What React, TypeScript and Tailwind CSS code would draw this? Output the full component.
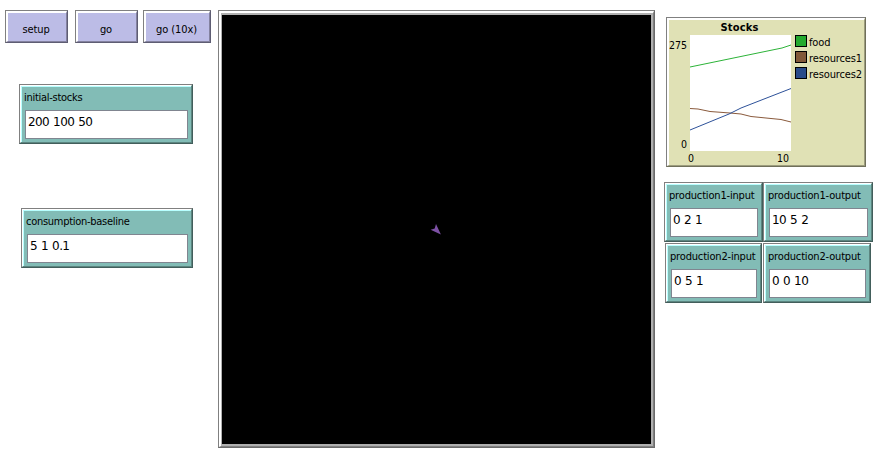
import React from "react";

const font = "font-['DejaVu_Sans_Condensed','DejaVu_Sans',sans-serif] [font-stretch:condensed]";

function CommandButton({ label, className }: { label: string; className: string }) {
  return (
    <button className={`h-[33px] border border-t-[#808080] border-l-[#808080] border-r-[#5e5d73] border-b-[#5e5d73] ${className}`}>
      <span className="flex h-full items-center justify-center border-t-2 border-l-2 border-r border-b border-t-white border-l-white border-r-[#84829f] border-b-[#84829f] bg-[#bcbce6] pt-[5px] pr-[2px] text-[11px] leading-[13px] tracking-[-0.1px] whitespace-nowrap">
        {label}
      </span>
    </button>
  );
}

function InputPanel({ label, value, className, tracking }: { label: string; value: string; className: string; tracking: string }) {
  return (
    <div className={`h-[60px] border border-t-[#808080] border-l-[#808080] border-r-[#425e5b] border-b-[#425e5b] ${className}`}>
      <div className="h-full border border-t-white border-l-white border-r-[#5c8580] border-b-[#5c8580]">
        <div className="flex h-full flex-col border-t border-l border-[#b8ffff] bg-[#82bcb6] pr-[3px] pb-[3px] pl-[3px]">
          <div className={`-ml-px h-[23px] pt-[4px] text-[11px] leading-[13px] whitespace-nowrap ${tracking}`}>{label}</div>
          <div className="h-[29px] border border-[#808590] bg-white pt-[4px] pl-[2px] font-['DejaVu_Sans',sans-serif] text-[12px] leading-[15px] tracking-[-0.6px] [font-stretch:normal] [word-spacing:0.8px] whitespace-nowrap">
            {value}
          </div>
        </div>
      </div>
    </div>
  );
}

const series = [
  { name: "food", swatch: "bg-[#24a92f]", color: "#2cb338", points: "0,32 92,13 101,10" },
  { name: "resources1", swatch: "bg-[#815839]", color: "#8a5a3c", points: "0,73.5 8,74 20,76.5 40,78 51,79 61,81.5 91,84.5 101,87" },
  { name: "resources2", swatch: "bg-[#294b89]", color: "#2d5199", points: "0,95 39,79 51,73 101,53.5" },
];

function StocksPlot() {
  return (
    <div className="ml-[2px] h-[150px] w-[200px] border border-t-[#808080] border-l-[#808080] border-r-[#70705a] border-b-[#70705a]">
      <div className="h-full border-t-2 border-l-2 border-r border-b border-t-white border-l-white border-r-[#9d9d7e] border-b-[#9d9d7e] bg-[#e0e1b5]">
        <div className="h-[15px] pt-px pr-[54px] text-center text-[11px] leading-[14px] font-bold tracking-[0.15px]">Stocks</div>
        <div className="flex">
          <div className="flex h-[116px] w-[21px] flex-col justify-between pt-[4px] pr-[3px] text-right text-[10.5px] leading-[13px]">
            <span>275</span>
            <span>0</span>
          </div>
          <div>
            <svg className="block bg-white" width="101" height="116" viewBox="0 0 101 116" fill="none">
              {series.map((s) => (
                <polyline key={s.name} points={s.points} stroke={s.color} strokeWidth="1" />
              ))}
            </svg>
            <div className="flex justify-between pt-px pr-[2px] text-[10.5px] leading-[13px]">
              <span className="-ml-[2px]">0</span>
              <span>10</span>
            </div>
          </div>
          <div className="flex flex-col gap-1 pl-1">
            {series.map((s) => (
              <div key={s.name} className="flex h-3 gap-[2px]">
                <span className={`h-3 w-3 border border-black ${s.swatch}`} />
                <span className="pt-px text-[11px] leading-[14px] tracking-[-0.12px]">{s.name}</span>
              </div>
            ))}
          </div>
        </div>
      </div>
    </div>
  );
}

function WorldView() {
  return (
    <div className="mt-[10px] ml-[7px] h-[438px] w-[437px] border border-t-[#808080] border-l-[#808080] border-r-[#6b6b6b] border-b-[#6b6b6b]">
      <div className="h-full border-t-2 border-l-2 border-r border-b border-t-white border-l-white border-r-[#808080] border-b-[#808080]">
        <div className="relative h-full border-t-2 border-l border-r-2 border-b-2 border-[#b0b0b0] bg-black">
          <svg className="absolute top-[209px] left-[208px]" width="12" height="12" viewBox="0 0 12 12">
            <path d="M6 .1 L10.9 10.6 L.6 5.7 L4.7 4.6 Z" fill="#7c50a4" />
          </svg>
        </div>
      </div>
    </div>
  );
}

export default function App() {
  return (
    <main className={`flex h-[465px] w-[890px] overflow-hidden bg-white text-black ${font}`}>
      <section className="w-[211px] shrink-0 pt-[10px] pl-[5px]">
        <div className="flex">
          <CommandButton label="setup" className="w-[63px]" />
          <CommandButton label="go" className="ml-[7px] w-[63px]" />
          <CommandButton label="go (10x)" className="ml-[5px] w-[68px]" />
        </div>
        <InputPanel label="initial-stocks" value="200 100 50" className="mt-[41px] ml-[14px] w-[174px]" tracking="tracking-[-0.28px]" />
        <InputPanel label="consumption-baseline" value="5 1 0.1" className="mt-[64px] ml-[16px] w-[172px]" tracking="tracking-[-0.28px]" />
      </section>
      <WorldView />
      <section className="ml-[9px] w-[209px] shrink-0 pt-[17px]">
        <StocksPlot />
        <div className="mt-[15px] flex">
          <InputPanel label="production1-input" value="0 2 1" className="w-[99px]" tracking="tracking-[-0.17px]" />
          <InputPanel label="production1-output" value="10 5 2" className="w-[110px]" tracking="tracking-[-0.17px]" />
        </div>
        <div className="mt-px ml-px flex gap-px">
          <InputPanel label="production2-input" value="0 5 1" className="w-[97px]" tracking="tracking-[-0.17px]" />
          <InputPanel label="production2-output" value="0 0 10" className="w-[108px]" tracking="tracking-[-0.17px]" />
        </div>
      </section>
    </main>
  );
}
